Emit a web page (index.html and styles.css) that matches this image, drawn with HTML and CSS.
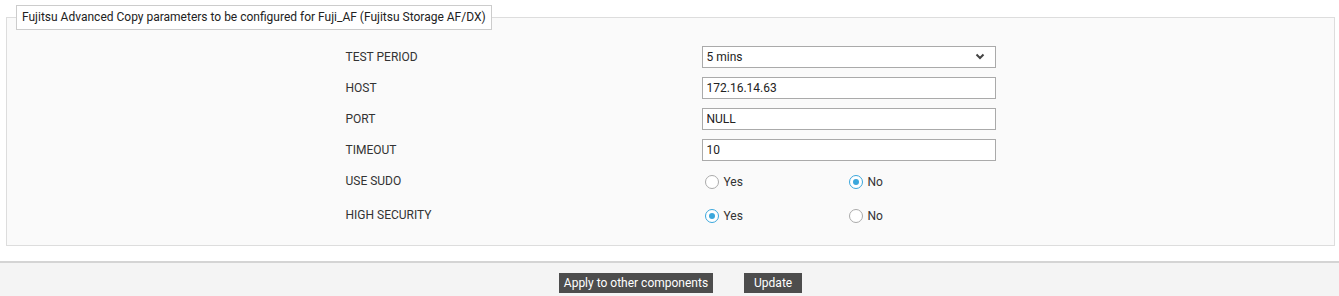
FILE: index.html
```html
<!DOCTYPE html>
<html>
  <head>
    <title>Fujitsu Advanced Copy parameters</title>
    <link rel="stylesheet" href="styles.css">
  </head>
  <body>
    <div class="page">
      <fieldset class="params">
        <legend>Fujitsu Advanced Copy parameters to be configured for Fuji_AF (Fujitsu Storage AF/DX)</legend>
        <div class="form-grid">
          <div class="row">
            <label class="field-label">TEST PERIOD</label>
            <div class="select-box">
              <span>5 mins</span>
              <svg class="chevron" width="10" height="7" viewBox="0 0 10 7">
                <path d="M1.5 1.5 L5 5 L8.5 1.5" fill="none" stroke="#444" stroke-width="2"/>
              </svg>
            </div>
          </div>
          <div class="row">
            <label class="field-label">HOST</label>
            <input class="text-input" type="text" value="172.16.14.63">
          </div>
          <div class="row">
            <label class="field-label">PORT</label>
            <input class="text-input" type="text" value="NULL">
          </div>
          <div class="row">
            <label class="field-label">TIMEOUT</label>
            <input class="text-input" type="text" value="10">
          </div>
          <div class="row row-radio">
            <label class="field-label">USE SUDO</label>
            <div class="radio-group">
              <span class="radio"><span class="dot"></span>Yes</span>
              <span class="radio"><span class="dot checked"></span>No</span>
            </div>
          </div>
          <div class="row row-radio">
            <label class="field-label">HIGH SECURITY</label>
            <div class="radio-group">
              <span class="radio"><span class="dot checked"></span>Yes</span>
              <span class="radio"><span class="dot"></span>No</span>
            </div>
          </div>
        </div>
      </fieldset>
    </div>
    <div class="footer">
      <button class="btn btn-wide">Apply to other components</button>
      <button class="btn">Update</button>
    </div>
  </body>
</html>
```

FILE: styles.css
```css
* {
  box-sizing: border-box;
}

body {
  margin: 0;
  font-family: Roboto, "Liberation Sans", sans-serif;
  font-size: 12px;
  color: #333;
  background: #fff;
}

.page {
  padding: 5px 4px 15px 6px;
}

.params {
  margin: 0;
  padding: 0 9px 12px 9px;
  border: 1px solid #ddd;
  background: #fafafa;
}

.params legend {
  padding: 0 5px;
  height: 25px;
  line-height: 23px;
  border: 1px solid #ccc;
  background: #fff;
  color: #222;
  font-size: 12px;
}

.form-grid {
  width: 650px;
  margin: 0 auto;
  padding-top: 11px;
}

.row {
  display: grid;
  grid-template-columns: 356px 294px;
  align-items: center;
  height: 31px;
}

.row-radio {
  height: 34px;
}

.row-radio .field-label {
  margin-top: -3px;
}

.field-label {
  color: #333;
}

.text-input,
.select-box {
  width: 294px;
  height: 22px;
  border: 1px solid #aaa;
  background: #fff;
  font-family: inherit;
  font-size: 12px;
  color: #222;
  padding: 0 4px;
  margin: 0;
  outline: none;
}

.select-box {
  display: flex;
  align-items: center;
  justify-content: space-between;
  padding: 0 10px 0 4px;
}

.radio-group {
  display: grid;
  grid-template-columns: 144px 144px;
  padding-left: 3px;
}

.radio {
  display: flex;
  align-items: center;
  gap: 5px;
  color: #333;
}

.dot {
  width: 14px;
  height: 14px;
  border-radius: 50%;
  border: 1px solid #aaa;
  background: #fff;
  display: flex;
  align-items: center;
  justify-content: center;
}

.dot.checked {
  border-color: #3aa7dc;
}

.dot.checked::after {
  content: "";
  width: 6px;
  height: 6px;
  border-radius: 50%;
  background: #3aa7dc;
}

.footer {
  border-top: 2px solid #d4d4d4;
  background: #f4f4f4;
  height: 35px;
  display: flex;
  justify-content: center;
  align-items: flex-start;
  gap: 31px;
  padding: 10px 0 0 22px;
}

.btn {
  height: 20px;
  padding: 0 10px;
  border: none;
  background: #4d4d4d;
  color: #fff;
  font-family: inherit;
  font-size: 12px;
  cursor: pointer;
}

.btn-wide {
  padding: 0 5px;
}
```
